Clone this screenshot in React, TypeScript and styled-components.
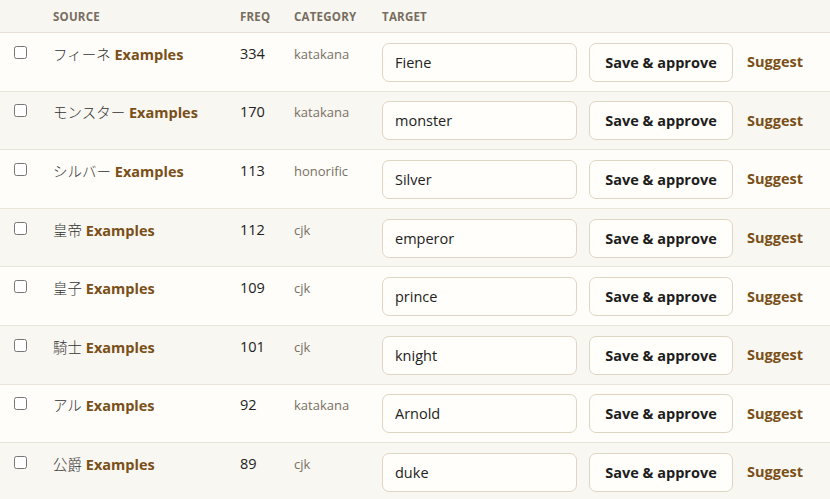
import React from "react";
import styled, { createGlobalStyle } from "styled-components";

interface Term {
  id: number;
  source: string;
  freq: number;
  category: string;
  target: string;
}

const terms: Term[] = [
  { id: 1, source: "フィーネ", freq: 334, category: "katakana", target: "Fiene" },
  { id: 2, source: "モンスター", freq: 170, category: "katakana", target: "monster" },
  { id: 3, source: "シルバー", freq: 113, category: "honorific", target: "Silver" },
  { id: 4, source: "皇帝", freq: 112, category: "cjk", target: "emperor" },
  { id: 5, source: "皇子", freq: 109, category: "cjk", target: "prince" },
  { id: 6, source: "騎士", freq: 101, category: "cjk", target: "knight" },
  { id: 7, source: "アル", freq: 92, category: "katakana", target: "Arnold" },
  { id: 8, source: "公爵", freq: 89, category: "cjk", target: "duke" },
];

const GlobalStyle = createGlobalStyle`
  body {
    margin: 0;
    background: #f9f7f2;
    font-family: "Open Sans", "Noto Sans", "Noto Sans CJK JP", sans-serif;
    color: #222;
  }
`;

const App: React.FC = () => {
  return (
    <>
      <GlobalStyle />
      <Table>
        <colgroup>
          <col style={{ width: 41 }} />
          <col style={{ width: 187 }} />
          <col style={{ width: 54 }} />
          <col style={{ width: 88 }} />
          <col />
        </colgroup>
        <thead>
          <tr>
            <HeadCell />
            <HeadCell>Source</HeadCell>
            <HeadCell>Freq</HeadCell>
            <HeadCell>Category</HeadCell>
            <HeadCell>Target</HeadCell>
          </tr>
        </thead>
        <tbody>
          {terms.map((term, i) => (
            <Row key={term.id} $odd={i % 2 === 0}>
              <CheckCell>
                <Check type="checkbox" />
              </CheckCell>
              <Cell>
                <SourceText>{term.source}</SourceText> <Link href="#">Examples</Link>
              </Cell>
              <Cell>{term.freq}</Cell>
              <CategoryCell>{term.category}</CategoryCell>
              <Cell>
                <Actions>
                  <TargetInput defaultValue={term.target} />
                  <SaveButton>Save &amp; approve</SaveButton>
                  <Link href="#">Suggest</Link>
                </Actions>
              </Cell>
            </Row>
          ))}
        </tbody>
      </Table>
    </>
  );
};

const Table = styled.table`
  width: 100%;
  border-collapse: collapse;
  table-layout: fixed;
`;

const HeadCell = styled.th`
  height: 32px;
  padding: 0 12px;
  text-align: left;
  background: #f8f6f0;
  border-bottom: 1px solid #e8e0d2;
  font-size: 11.5px;
  font-weight: 700;
  letter-spacing: 0.02em;
  text-transform: uppercase;
  color: #776d60;
  vertical-align: middle;
`;

const Row = styled.tr<{ $odd: boolean }>`
  background: ${(p) => (p.$odd ? "#fefdf9" : "#f9f7f2")};
  border-bottom: 1px solid #ebe4d8;
`;

const Cell = styled.td`
  padding: 9.8px 12px 8.8px;
  vertical-align: top;
  font-size: 14.5px;
  line-height: 22px;
  white-space: nowrap;
`;

const CheckCell = styled(Cell)`
  padding-left: 14px;
  padding-right: 0;
`;

const CategoryCell = styled(Cell)`
  font-size: 13px;
  color: #787165;
`;

const Check = styled.input`
  width: 13px;
  height: 13px;
  margin: 3px 0 0;
  accent-color: #7a5018;
`;

const SourceText = styled.span`
  font-family: "Noto Sans CJK JP", sans-serif;
  font-weight: 300;
  color: #333;
`;

const Link = styled.a`
  color: #7a4f18;
  font-weight: 700;
  text-decoration: none;
  font-size: 14.5px;
`;

const Actions = styled.div`
  display: flex;
  align-items: center;
  gap: 12px;
`;

const TargetInput = styled.input`
  box-sizing: border-box;
  width: 195px;
  height: 39px;
  padding: 0 12px;
  border: 1px solid #e0d5c3;
  border-radius: 7px;
  background: #fffefa;
  font-family: inherit;
  font-size: 14.5px;
  color: #222;
  outline: none;
`;

const SaveButton = styled.button`
  box-sizing: border-box;
  width: 144px;
  height: 39px;
  margin-right: 2px;
  border: 1px solid #e0d5c3;
  border-radius: 7px;
  background: #fffefa;
  font-family: inherit;
  font-size: 14.5px;
  font-weight: 700;
  color: #1d1d1d;
  cursor: pointer;
`;

export default App;
